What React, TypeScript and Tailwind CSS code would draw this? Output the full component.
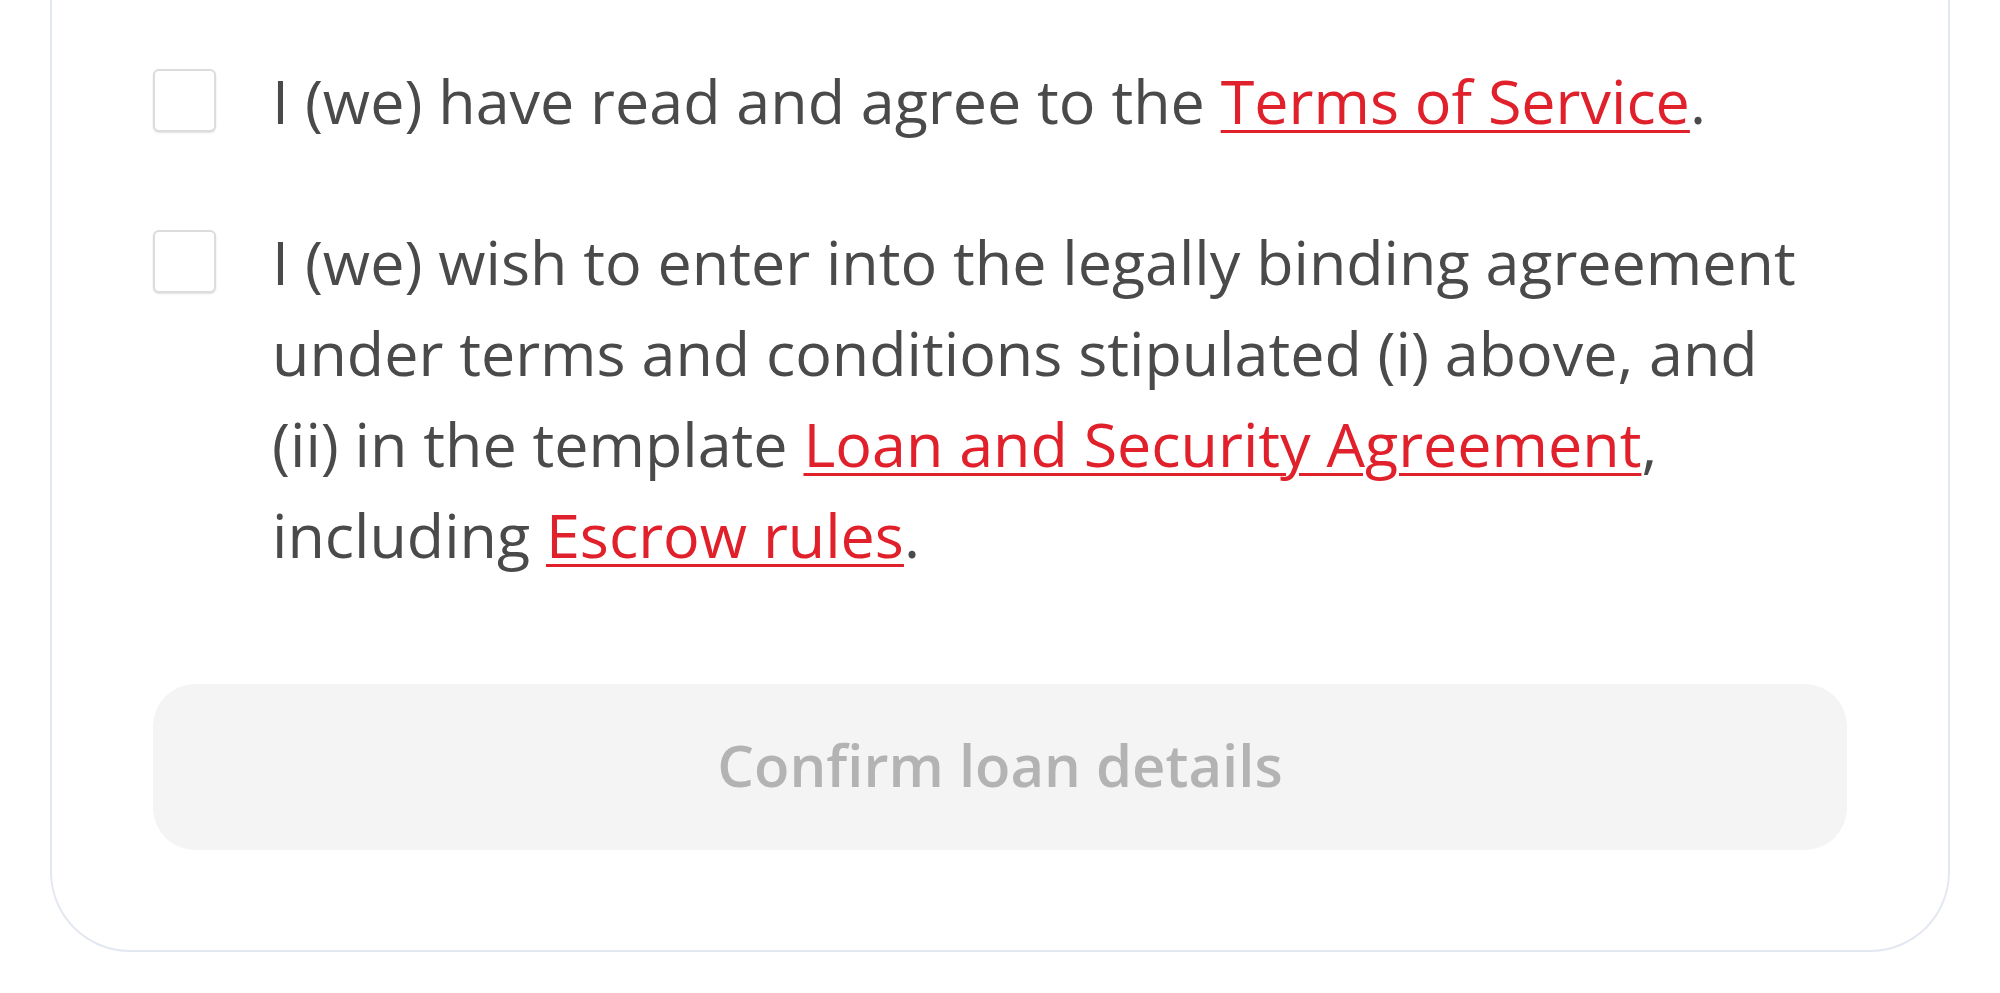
import React, { useState } from "react";

const font = { fontFamily: "'Open Sans', 'Liberation Sans', sans-serif" };

const Checkbox: React.FC<{ checked: boolean; onChange: () => void }> = ({ checked, onChange }) => (
  <button
    type="button"
    onClick={onChange}
    className="mt-[14px] h-[63px] w-[63px] shrink-0 rounded-[6px] border-2 border-[#dcdcdc] bg-white shadow-[0_1px_2px_rgba(0,0,0,0.12)]"
  >
    {checked && (
      <svg viewBox="0 0 24 24" className="h-full w-full p-2 text-[#e0202a]" fill="none" stroke="currentColor" strokeWidth={3}>
        <path d="M5 12l5 5 9-10" />
      </svg>
    )}
  </button>
);

const Link: React.FC<{ children: React.ReactNode }> = ({ children }) => (
  <a href="#" className="text-[#e0202a] underline decoration-[3px] underline-offset-[6px]">
    {children}
  </a>
);

export default function App() {
  const [terms, setTerms] = useState(false);
  const [agreement, setAgreement] = useState(false);

  return (
    <div className="min-h-screen bg-white" style={font}>
      <div className="mx-[50px] rounded-b-[80px] border-x-2 border-b-2 border-[#e3e8f0] px-[101px] pt-[55px] pb-[100px]">
        {/* Términos */}
        <div className="flex gap-[56px]">
          <Checkbox checked={terms} onChange={() => setTerms(!terms)} />
          <p className="text-[61px] leading-[91px] text-[#4a4a4a]">
            I (we) have read and agree to the <Link>Terms of Service</Link>.
          </p>
        </div>

        {/* Acuerdo */}
        <div className="mt-[70px] flex gap-[56px]">
          <Checkbox checked={agreement} onChange={() => setAgreement(!agreement)} />
          <p className="max-w-[1545px] text-[61px] leading-[91px] text-[#4a4a4a]">
            I (we) wish to enter into the legally binding agreement under terms and conditions stipulated (i)
            above, and (ii) in the template <Link>Loan and Security Agreement</Link>, including{" "}
            <Link>Escrow rules</Link>.
          </p>
        </div>

        <button
          type="button"
          disabled={!terms || !agreement}
          className="mt-[104px] flex h-[166px] w-full items-center justify-center rounded-[42px] bg-[#f4f4f4] pb-[6px] text-[58px] font-semibold text-[#b3b3b3]"
        >
          Confirm loan details
        </button>
      </div>
    </div>
  );
}
